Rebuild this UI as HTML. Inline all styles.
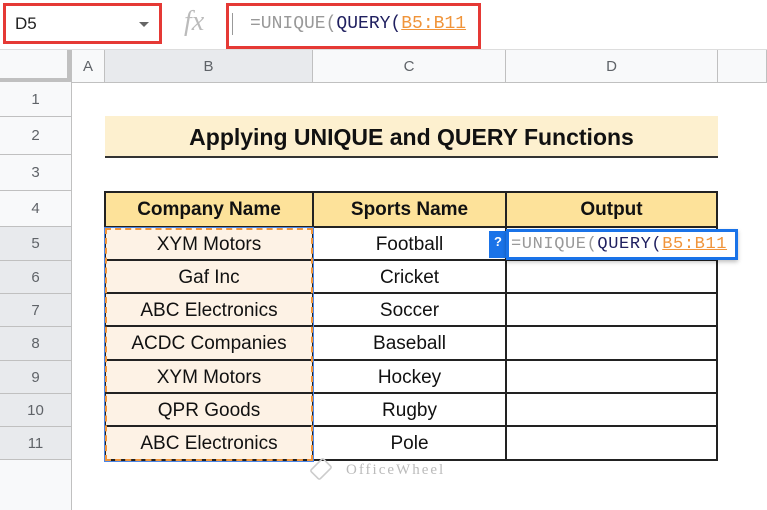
<!DOCTYPE html><html><head><style>
body{margin:0;width:767px;height:510px;overflow:hidden;background:#fff;font-family:"Liberation Sans",Arial,sans-serif;position:relative}
.a{position:absolute;box-sizing:border-box}
.rh{position:absolute;left:0;width:72px;background:#f8f9fa;border-bottom:1px solid #c0c0c0;border-right:1px solid #c0c0c0;color:#5f6368;font-size:15px;text-align:center;box-sizing:border-box}
.ch{position:absolute;top:50px;height:33px;background:#f8f9fa;border-right:1px solid #c0c0c0;border-bottom:1px solid #c0c0c0;color:#5f6368;font-size:15px;text-align:center;line-height:33px;box-sizing:border-box}
.c{position:absolute;box-sizing:border-box;text-align:center;font-size:19px;color:#111;border-bottom:2px solid #222;border-right:2px solid #222}
</style></head><body>
<div class="a" style="left:0;top:0;width:767px;height:50px;background:#fff;border-bottom:1px solid #ddd"></div>
<div class="a" style="left:3px;top:3px;width:159px;height:41px;border:3px solid #e53935;background:#fff;font-size:17px;line-height:35px;padding-left:9px;color:#222">D5<span style="position:absolute;right:10px;top:16px;border-left:5px solid transparent;border-right:5px solid transparent;border-top:5px solid #666"></span></div>
<div class="a" style="left:184px;top:6px;font-family:'Liberation Serif',serif;font-style:italic;font-size:28px;color:#bbb">fx</div>
<div class="a" style="left:226px;top:3px;width:255px;height:46px;border:3px solid #e53935;background:#fff"></div>
<div class="a" style="left:232px;top:13px;width:1px;height:22px;background:#999"></div>
<div class="a" style="left:250px;top:14px;font-family:'Liberation Mono',monospace;font-size:18px;letter-spacing:0;color:#999">=UNIQUE(<span style="color:#202060">QUERY(</span><span style="color:#f0943a;text-decoration:underline">B5:B11</span></div>
<div class="a" style="left:0;top:50px;width:72px;height:33px;background:#f8f9fa;border-right:5px solid #c0c0c0;border-bottom:5px solid #c0c0c0"></div>
<div class="ch" style="left:72px;width:33px">A</div>
<div class="ch" style="left:105px;width:208px;background:#e8eaed">B</div>
<div class="ch" style="left:313px;width:193px">C</div>
<div class="ch" style="left:506px;width:212px">D</div>
<div class="ch" style="left:718px;width:49px"></div>
<div class="rh" style="top:82px;height:35px;line-height:35px">1</div>
<div class="rh" style="top:117px;height:38px;line-height:38px">2</div>
<div class="rh" style="top:155px;height:36px;line-height:36px">3</div>
<div class="rh" style="top:191px;height:36px;line-height:36px">4</div>
<div class="rh" style="top:227px;height:34px;line-height:34px;background:#e8eaed">5</div>
<div class="rh" style="top:261px;height:33px;line-height:33px;background:#e8eaed">6</div>
<div class="rh" style="top:294px;height:33px;line-height:33px;background:#e8eaed">7</div>
<div class="rh" style="top:327px;height:34px;line-height:34px;background:#e8eaed">8</div>
<div class="rh" style="top:361px;height:33px;line-height:33px;background:#e8eaed">9</div>
<div class="rh" style="top:394px;height:33px;line-height:33px;background:#e8eaed">10</div>
<div class="rh" style="top:427px;height:33px;line-height:33px;background:#e8eaed">11</div>
<div class="a" style="left:0;top:460px;width:72px;height:50px;background:#f8f9fa;border-right:1px solid #c0c0c0"></div>
<div class="a" style="left:105px;top:116px;width:613px;height:42px;background:#fdf0cf;border-bottom:2px solid #333;font-weight:bold;font-size:23px;text-align:center;line-height:42px;color:#111">Applying UNIQUE and QUERY Functions</div>
<div class="a" style="left:104px;top:191px;width:614px;height:2px;background:#222"></div>
<div class="a" style="left:104px;top:191px;width:2px;height:270px;background:#222"></div>
<div class="c" style="left:106px;top:193px;width:208px;height:35px;line-height:34px;background:#fde29a;font-weight:bold">Company Name</div>
<div class="c" style="left:314px;top:193px;width:193px;height:35px;line-height:34px;background:#fde29a;font-weight:bold">Sports Name</div>
<div class="c" style="left:507px;top:193px;width:211px;height:35px;line-height:34px;background:#fde29a;font-weight:bold">Output</div>
<div class="c" style="left:106px;top:228px;width:208px;height:33px;line-height:33px;background:#fdf2e5">XYM Motors</div>
<div class="c" style="left:314px;top:228px;width:193px;height:33px;line-height:33px">Football</div>
<div class="c" style="left:507px;top:228px;width:211px;height:33px"></div>
<div class="c" style="left:106px;top:261px;width:208px;height:33px;line-height:33px;background:#fdf2e5">Gaf Inc</div>
<div class="c" style="left:314px;top:261px;width:193px;height:33px;line-height:33px">Cricket</div>
<div class="c" style="left:507px;top:261px;width:211px;height:33px"></div>
<div class="c" style="left:106px;top:294px;width:208px;height:33px;line-height:33px;background:#fdf2e5">ABC Electronics</div>
<div class="c" style="left:314px;top:294px;width:193px;height:33px;line-height:33px">Soccer</div>
<div class="c" style="left:507px;top:294px;width:211px;height:33px"></div>
<div class="c" style="left:106px;top:327px;width:208px;height:34px;line-height:34px;background:#fdf2e5">ACDC Companies</div>
<div class="c" style="left:314px;top:327px;width:193px;height:34px;line-height:34px">Baseball</div>
<div class="c" style="left:507px;top:327px;width:211px;height:34px"></div>
<div class="c" style="left:106px;top:361px;width:208px;height:33px;line-height:33px;background:#fdf2e5">XYM Motors</div>
<div class="c" style="left:314px;top:361px;width:193px;height:33px;line-height:33px">Hockey</div>
<div class="c" style="left:507px;top:361px;width:211px;height:33px"></div>
<div class="c" style="left:106px;top:394px;width:208px;height:33px;line-height:33px;background:#fdf2e5">QPR Goods</div>
<div class="c" style="left:314px;top:394px;width:193px;height:33px;line-height:33px">Rugby</div>
<div class="c" style="left:507px;top:394px;width:211px;height:33px"></div>
<div class="c" style="left:106px;top:427px;width:208px;height:34px;line-height:33px;background:#fdf2e5">ABC Electronics</div>
<div class="c" style="left:314px;top:427px;width:193px;height:34px;line-height:33px">Pole</div>
<div class="c" style="left:507px;top:427px;width:211px;height:34px"></div>
<div class="a" style="left:105px;top:228px;width:208px;height:233px;border:2px dashed #f0943a;outline:1px solid #4a86e8"></div>
<div class="a" style="left:489px;top:231px;width:18px;height:27px;background:#1a73e8;color:#fff;font-weight:bold;font-size:13px;text-align:center;line-height:22px">?</div>
<div class="a" style="left:506px;top:229px;width:232px;height:31px;border:3px solid #1a73e8;background:#fff;box-shadow:0 2px 4px rgba(0,0,0,.25);font-family:'Liberation Mono',monospace;font-size:17px;letter-spacing:0.6px;line-height:25px;padding-left:2px;color:#999;white-space:nowrap;overflow:hidden">=UNIQUE(<span style="color:#202060">QUERY(</span><span style="color:#f0943a;text-decoration:underline">B5:B11</span></div>
<div class="a" style="left:312px;top:457px;width:18px;height:24px;border:2px solid #ccc;border-radius:3px;transform:rotate(45deg) scale(.8)"></div>
<div class="a" style="left:346px;top:462px;font-family:'Liberation Serif',serif;font-size:15px;letter-spacing:2px;color:#bbb">OfficeWheel</div>
</body></html>
